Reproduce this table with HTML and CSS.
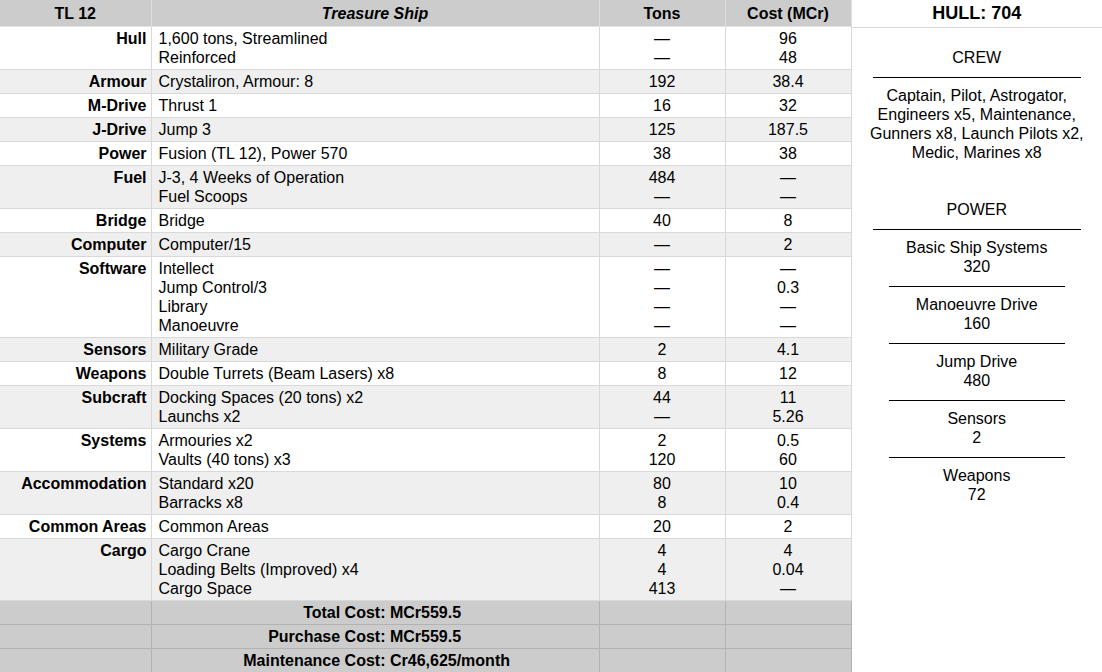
FILE: index.html
```html
<!DOCTYPE html>
<html>
<head>
<meta charset="utf-8">
<link rel="stylesheet" href="styles.css">
</head>
<body>
<div class="page">
  <table class="ship">
    <colgroup>
      <col class="c1"><col class="c2"><col class="c3"><col class="c4">
    </colgroup>
    <thead>
      <tr class="head">
        <th>TL 12</th>
        <th class="name">Treasure Ship</th>
        <th>Tons</th>
        <th>Cost (MCr)</th>
      </tr>
    </thead>
    <tbody>
      <tr class="w"><td class="lbl">Hull</td><td class="desc">1,600 tons, Streamlined<br>Reinforced</td><td class="num">—<br>—</td><td class="num">96<br>48</td></tr>
      <tr class="g"><td class="lbl">Armour</td><td class="desc">Crystaliron, Armour: 8</td><td class="num">192</td><td class="num">38.4</td></tr>
      <tr class="w"><td class="lbl">M-Drive</td><td class="desc">Thrust 1</td><td class="num">16</td><td class="num">32</td></tr>
      <tr class="g"><td class="lbl">J-Drive</td><td class="desc">Jump 3</td><td class="num">125</td><td class="num">187.5</td></tr>
      <tr class="w"><td class="lbl">Power</td><td class="desc">Fusion (TL 12), Power 570</td><td class="num">38</td><td class="num">38</td></tr>
      <tr class="g"><td class="lbl">Fuel</td><td class="desc">J-3, 4 Weeks of Operation<br>Fuel Scoops</td><td class="num">484<br>—</td><td class="num">—<br>—</td></tr>
      <tr class="w"><td class="lbl">Bridge</td><td class="desc">Bridge</td><td class="num">40</td><td class="num">8</td></tr>
      <tr class="g"><td class="lbl">Computer</td><td class="desc">Computer/15</td><td class="num">—</td><td class="num">2</td></tr>
      <tr class="w"><td class="lbl">Software</td><td class="desc">Intellect<br>Jump Control/3<br>Library<br>Manoeuvre</td><td class="num">—<br>—<br>—<br>—</td><td class="num">—<br>0.3<br>—<br>—</td></tr>
      <tr class="g"><td class="lbl">Sensors</td><td class="desc">Military Grade</td><td class="num">2</td><td class="num">4.1</td></tr>
      <tr class="w"><td class="lbl">Weapons</td><td class="desc">Double Turrets (Beam Lasers) x8</td><td class="num">8</td><td class="num">12</td></tr>
      <tr class="g"><td class="lbl">Subcraft</td><td class="desc">Docking Spaces (20 tons) x2<br>Launchs x2</td><td class="num">44<br>—</td><td class="num">11<br>5.26</td></tr>
      <tr class="w"><td class="lbl">Systems</td><td class="desc">Armouries x2<br>Vaults (40 tons) x3</td><td class="num">2<br>120</td><td class="num">0.5<br>60</td></tr>
      <tr class="g"><td class="lbl">Accommodation</td><td class="desc">Standard x20<br>Barracks x8</td><td class="num">80<br>8</td><td class="num">10<br>0.4</td></tr>
      <tr class="w"><td class="lbl">Common Areas</td><td class="desc">Common Areas</td><td class="num">20</td><td class="num">2</td></tr>
      <tr class="g"><td class="lbl">Cargo</td><td class="desc">Cargo Crane<br>Loading Belts (Improved) x4<br>Cargo Space</td><td class="num">4<br>4<br>413</td><td class="num">4<br>0.04<br>—</td></tr>
    </tbody>
    <tfoot>
      <tr class="tot"><td></td><td class="totv"><span class="tk">Total Cost:</span> <span>MCr559.5</span></td><td></td><td></td></tr>
      <tr class="tot"><td></td><td class="totv"><span class="tk">Purchase Cost:</span> <span>MCr559.5</span></td><td></td><td></td></tr>
      <tr class="tot"><td></td><td class="totv"><span class="tk">Maintenance Cost:</span> <span>Cr46,625/month</span></td><td></td><td></td></tr>
    </tfoot>
  </table>
  <aside class="side">
    <div class="side-head">HULL: 704</div>
    <div class="side-body">
      <div class="sect">CREW</div>
      <div class="rule wide"></div>
      <div class="txt">Captain, Pilot, Astrogator,<br>Engineers x5, Maintenance,<br>Gunners x8, Launch Pilots x2,<br>Medic, Marines x8</div>
      <div class="sect power">POWER</div>
      <div class="rule wide"></div>
      <div class="txt">Basic Ship Systems<br>320</div>
      <div class="rule narrow"></div>
      <div class="txt">Manoeuvre Drive<br>160</div>
      <div class="rule narrow"></div>
      <div class="txt">Jump Drive<br>480</div>
      <div class="rule narrow"></div>
      <div class="txt">Sensors<br>2</div>
      <div class="rule narrow"></div>
      <div class="txt">Weapons<br>72</div>
    </div>
  </aside>
</div>
</body>
</html>
```

FILE: styles.css
```css
html, body {
  margin: 0;
  padding: 0;
  background: #ffffff;
}
body {
  font-family: "Liberation Sans", Arial, sans-serif;
  font-size: 16px;
  line-height: 19px;
  color: #000;
}
.page {
  display: flex;
  width: 1102px;
  height: 672px;
  overflow: hidden;
}
.ship {
  width: 851px;
  flex: none;
  border-collapse: collapse;
  table-layout: fixed;
}
.c1 { width: 151px; }
.c2 { width: 448px; }
.c3 { width: 126px; }
.c4 { width: 126px; }
.ship th, .ship td {
  padding: 2px 0 2px 0;
  border-right: 1px solid #d9d9d9;
  border-bottom: 1px solid #d9d9d9;
  vertical-align: top;
}
.head th {
  background: #cccccc;
  font-weight: bold;
  text-align: center;
  padding: 4px 0 3px 0;
  border-right-color: #dedede;
  border-bottom-color: #e2e2e2;
}
.head th.name { font-style: italic; }
.w td { background: #ffffff; }
.g td { background: #efefef; }
.lbl {
  font-weight: bold;
  text-align: right;
  padding-right: 4px !important;
}
.desc {
  text-align: left;
  padding-left: 7px !important;
}
.num { text-align: center; }
.tot td {
  background: #cccccc;
  border-color: #b3b3b3;
  border-top: 1px solid #b3b3b3;
}
.totv {
  font-weight: bold;
  text-align: left;
  white-space: nowrap;
}
.tk {
  display: inline-block;
  width: 234px;
  text-align: right;
}
.side {
  flex: 1;
  text-align: center;
}
.side-head {
  height: 27px;
  line-height: 27px;
  font-weight: bold;
  font-size: 18px;
  border-bottom: 1px solid #d9d9d9;
}
.side-body {
  display: flex;
  flex-direction: column;
  align-items: center;
  padding-top: 20px;
}
.sect.power { margin-top: 38px; }
.rule {
  height: 0;
  border-top: 1px solid #000;
  margin: 10px 0 8px 0;
}
.rule.wide { width: 208px; }
.rule.narrow { width: 176px; }
```
